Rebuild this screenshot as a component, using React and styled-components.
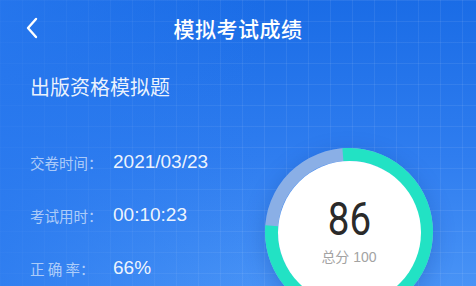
import styled, { createGlobalStyle } from "styled-components";

const GlobalStyle = createGlobalStyle`
  html, body {
    margin: 0;
    padding: 0;
    overflow: hidden;
  }
  body {
    font-family: "Liberation Sans", "Noto Sans CJK SC", sans-serif;
  }
`;

const result = {
  title: "模拟考试成绩",
  paper: "出版资格模拟题",
  score: 86,
  total: 100,
  rows: [
    { label: "交卷时间：", value: "2021/03/23" },
    { label: "考试用时：", value: "00:10:23" },
    { label: "正 确 率：", value: "66%" },
  ],
};

const RADIUS = 77.5;
const CIRC = 2 * Math.PI * RADIUS;
const ARC = 0.774;

const App = () => {
  return (
    <Page>
      <GlobalStyle />
      <Header>
        <BackButton aria-label="back">
          <svg width="14" height="22" viewBox="0 0 14 22">
            <path
              d="M11 2 L3 11 L11 20"
              fill="none"
              stroke="#fff"
              strokeWidth="2.4"
              strokeLinecap="round"
              strokeLinejoin="round"
            />
          </svg>
        </BackButton>
        <Title>{result.title}</Title>
        <span />
      </Header>

      <PaperName>{result.paper}</PaperName>

      <Body>
        <InfoList>
          {result.rows.map((row) => (
            <InfoRow key={row.label}>
              <Label>{row.label}</Label>
              <Value>{row.value}</Value>
            </InfoRow>
          ))}
        </InfoList>

        <Ring>
          <RingChart width="168" height="168" viewBox="0 0 168 168">
            <circle
              cx="84"
              cy="84"
              r={RADIUS}
              fill="none"
              stroke="#8aafe6"
              strokeWidth="13"
            />
            <circle
              cx="84"
              cy="84"
              r={RADIUS}
              fill="none"
              stroke="#22e2c4"
              strokeWidth="13"
              strokeDasharray={`${CIRC * ARC} ${CIRC}`}
              transform="rotate(-94.5 84 84)"
            />
          </RingChart>
          <Disc>
            <Score>{result.score}</Score>
            <Total>总分 {result.total}</Total>
          </Disc>
        </Ring>
      </Body>
    </Page>
  );
};

const Page = styled.div`
  width: 476px;
  height: 286px;
  overflow: hidden;
  color: #fff;
  background:
    linear-gradient(
      90deg,
      rgba(40, 120, 238, 0.75) 0%,
      rgba(40, 120, 238, 0) 55%
    ),
    repeating-linear-gradient(
      90deg,
      rgba(255, 255, 255, 0.07) 0 1px,
      transparent 1px 22px
    ),
    repeating-linear-gradient(
      180deg,
      rgba(255, 255, 255, 0.07) 0 1px,
      transparent 1px 21px
    ),
    linear-gradient(180deg, #1a6ce6 0%, #2f7def 55%, #4893f6 100%);
`;

const Header = styled.div`
  height: 56px;
  display: grid;
  grid-template-columns: 60px 1fr 60px;
  align-items: center;
`;

const BackButton = styled.button`
  border: 0;
  background: none;
  padding: 0 0 0 25px;
  height: 24px;
  display: flex;
  align-items: center;
  cursor: pointer;
`;

const Title = styled.h1`
  margin: 0;
  text-align: center;
  font-size: 21px;
  font-weight: 500;
  letter-spacing: 0.5px;
  font-family: "Noto Sans CJK SC", sans-serif;
`;

const PaperName = styled.div`
  margin: 11px 0 0 30px;
  height: 40px;
  line-height: 40px;
  font-size: 20px;
  font-family: "Noto Sans CJK SC", sans-serif;
  color: rgba(255, 255, 255, 0.92);
`;

const Body = styled.div`
  display: flex;
  justify-content: space-between;
  padding: 0 43px 0 30px;
`;

const InfoList = styled.div`
  display: flex;
  flex-direction: column;
  gap: 25px;
  padding-top: 41px;
`;

const InfoRow = styled.div`
  display: flex;
  align-items: center;
  height: 28px;
`;

const Label = styled.span`
  width: 83px;
  font-size: 14.5px;
  font-family: "Noto Sans CJK SC", sans-serif;
  color: rgba(255, 255, 255, 0.62);
  white-space: pre;
`;

const Value = styled.span`
  font-size: 19px;
  color: rgba(255, 255, 255, 0.93);
`;

const Ring = styled.div`
  position: relative;
  width: 168px;
  height: 168px;
  margin-top: 41px;
  display: grid;
  place-items: center;
  border-radius: 50%;
  box-shadow: 0 6px 22px rgba(10, 50, 140, 0.28);
`;

const RingChart = styled.svg`
  position: absolute;
  inset: 0;
`;

const Disc = styled.div`
  position: relative;
  width: 143px;
  height: 143px;
  border-radius: 50%;
  background: #fff;
  display: flex;
  flex-direction: column;
  align-items: center;
  justify-content: center;
  padding-bottom: 4px;
  box-sizing: border-box;
`;

const Score = styled.div`
  font-family: Roboto, "Liberation Sans", sans-serif;
  font-size: 47px;
  line-height: 48px;
  color: #2a2a2a;
  transform: scaleX(0.82);
`;

const Total = styled.div`
  margin-top: 3px;
  font-size: 14px;
  color: #a3a3a3;
  font-family: "Liberation Sans", "Noto Sans CJK SC", sans-serif;
`;

export default App;
